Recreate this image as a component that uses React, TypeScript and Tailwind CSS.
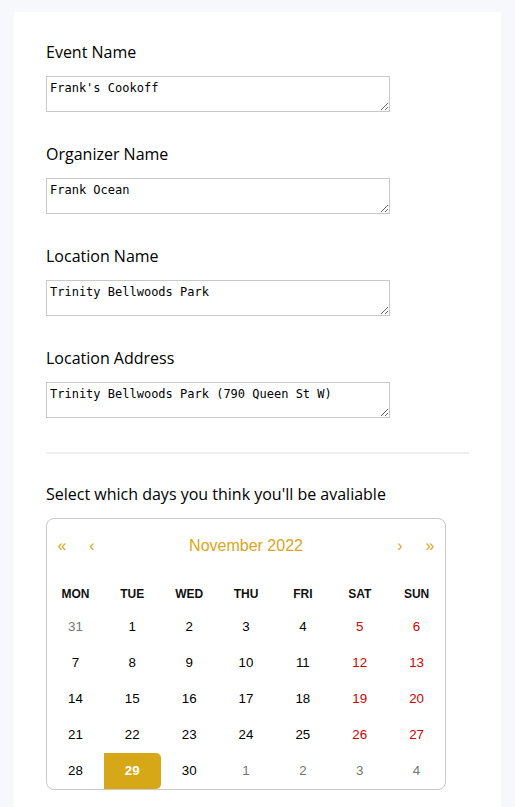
import React from 'react';

const fields = [
  { label: 'Event Name', value: "Frank's Cookoff" },
  { label: 'Organizer Name', value: 'Frank Ocean' },
  { label: 'Location Name', value: 'Trinity Bellwoods Park' },
  { label: 'Location Address', value: 'Trinity Bellwoods Park (790 Queen St W)' },
];

const weekdays = ['MON', 'TUE', 'WED', 'THU', 'FRI', 'SAT', 'SUN'];

type Day = { n: number; other?: boolean };

// Nov 2022 starts on a Tuesday
const days: Day[] = [
  { n: 31, other: true },
  ...Array.from({ length: 30 }, (_, i) => ({ n: i + 1 })),
  { n: 1, other: true },
  { n: 2, other: true },
  { n: 3, other: true },
  { n: 4, other: true },
];

function Calendar() {
  return (
    <div className="w-[400px] border border-[#c8c8c8] rounded-lg overflow-hidden bg-white font-['Liberation_Sans',Arial,sans-serif]">
      {/* Navigation */}
      <div className="flex h-[54px] items-center text-[16px] text-[#daa520]">
        <button className="w-[30px] h-full">«</button>
        <button className="w-[30px] h-full">‹</button>
        <span className="flex-1 text-center">November 2022</span>
        <button className="w-[30px] h-full">›</button>
        <button className="w-[30px] h-full">»</button>
      </div>

      {/* Weekdays */}
      <div className="grid grid-cols-7 h-[36px] pt-[13px] text-[12px] leading-[16px] font-bold text-[#111] text-center">
        {weekdays.map((d) => (
          <div key={d}>{d}</div>
        ))}
      </div>

      {/* Days */}
      <div className="grid grid-cols-7 text-[13.33px] text-center">
        {days.map((d, i) => {
          const col = i % 7;
          const weekend = col >= 5;
          const selected = !d.other && d.n === 29;
          let color = 'text-black';
          if (d.other) color = 'text-[#757575]';
          else if (weekend) color = 'text-[#d10000]';
          return (
            <button
              key={i}
              className={
                selected
                  ? 'h-[36px] leading-[16px] bg-[#d6a717] text-white font-bold rounded-r-[5px]'
                  : `h-[36px] leading-[16px] ${color}`
              }
            >
              {d.n}
            </button>
          );
        })}
      </div>
    </div>
  );
}

export default function App() {
  return (
    <div className="min-h-screen bg-[#f7f8fc] pt-[12px] pl-[14px]">
      <div className="w-[487px] bg-white px-[32px] pt-[28px] pb-[40px] font-['Open_Sans',sans-serif] text-black">
        {fields.map((f) => (
          <div key={f.label} className="mb-[30px]">
            <label className="block text-[16px] leading-[24px] font-medium mb-[12px]">{f.label}</label>
            <textarea
              defaultValue={f.value}
              className="block w-[344px] h-[36px] border border-[#c8c8c8] px-[3px] pt-[4px] text-[12px] leading-[14px] text-black font-['DejaVu_Sans_Mono',monospace] outline-none resize-y"
            />
          </div>
        ))}

        <div className="h-[2px] bg-[#eeeeee] mt-[34px] mb-[28px]" />

        <div className="text-[16px] leading-[24px] font-medium mb-[12px]">Select which days you think you'll be avaliable</div>
        <Calendar />
      </div>
    </div>
  );
}
